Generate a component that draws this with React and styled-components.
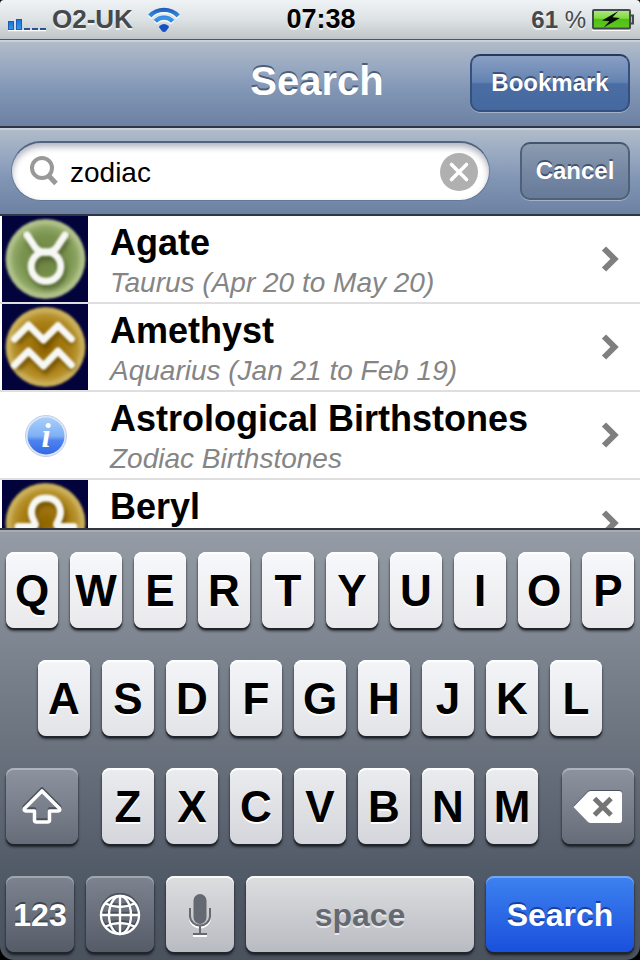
import React, { useState } from 'react';
import styled, { createGlobalStyle, css } from 'styled-components';

const results = [
  { name: 'Agate', detail: 'Taurus (Apr 20 to May 20)', sign: 'taurus' },
  { name: 'Amethyst', detail: 'Aquarius (Jan 21 to Feb 19)', sign: 'aquarius' },
  { name: 'Astrological Birthstones', detail: 'Zodiac Birthstones', sign: 'info' },
  { name: 'Beryl', detail: '', sign: 'libra' },
];

export default function App() {
  const [query, setQuery] = useState('zodiac');

  const type = (letter) => setQuery(query + letter.toLowerCase());

  return (
    <>
      <GlobalStyle />
      <Screen>
        <StatusBar>
          <StatusGroup>
            <SignalIcon />
            <Carrier>O2-UK</Carrier>
            <WifiIcon />
          </StatusGroup>
          <Clock>07:38</Clock>
          <StatusGroup $end>
            <Percent>61 <span>%</span></Percent>
            <BatteryIcon />
          </StatusGroup>
        </StatusBar>

        <NavBar>
          <span />
          <NavTitle>Search</NavTitle>
          <BarButton $blue>Bookmark</BarButton>
        </NavBar>

        <SearchBar onSubmit={(e) => e.preventDefault()}>
          <SearchField>
            <MagnifierIcon />
            <SearchInput
              aria-label="Search"
              value={query}
              onChange={(e) => setQuery(e.target.value)}
            />
            <ClearButton type="button" aria-label="Clear" onClick={() => setQuery('')}>
              <svg width="38" height="38" viewBox="0 0 38 38">
                <circle cx="19" cy="19" r="19" fill="#b0b0b0" />
                <path d="M11.5 11.5l15 15M26.5 11.5l-15 15" stroke="#fff" strokeWidth="3.6" strokeLinecap="round" />
              </svg>
            </ClearButton>
          </SearchField>
          <BarButton type="button" $narrow>Cancel</BarButton>
        </SearchBar>

        <List>
          {results.map((item) => (
            <Row key={item.name}>
              <RowLink href="#">
                <SignIcon sign={item.sign} />
                <RowText>
                  <RowTitle>{item.name}</RowTitle>
                  <RowDetail>{item.detail}</RowDetail>
                </RowText>
                <ChevronIcon />
              </RowLink>
            </Row>
          ))}
        </List>

        <Keyboard>
          <KeyRow>
            {[...'QWERTYUIOP'].map((k) => (
              <Key key={k} $tone="bright" onClick={() => type(k)}>{k}</Key>
            ))}
          </KeyRow>
          <KeyRow $inset>
            {[...'ASDFGHJKL'].map((k) => (
              <Key key={k} $tone="light" onClick={() => type(k)}>{k}</Key>
            ))}
          </KeyRow>
          <KeyRow $wide>
            <Key $tone="gray" $width="72px" aria-label="Shift"><ShiftIcon /></Key>
            <KeyGroup>
              {[...'ZXCVBNM'].map((k) => (
                <Key key={k} $tone="soft" onClick={() => type(k)}>{k}</Key>
              ))}
            </KeyGroup>
            <Key $tone="gray" $width="72px" aria-label="Delete" onClick={() => setQuery(query.slice(0, -1))}>
              <DeleteIcon />
            </Key>
          </KeyRow>
          <KeyRow>
            <Key $tone="slate" $width="68px" $label>123</Key>
            <Key $tone="slate" $width="68px" aria-label="Next keyboard"><GlobeIcon /></Key>
            <Key $tone="silver" $width="68px" aria-label="Dictate"><MicIcon /></Key>
            <Key $tone="silver" $label onClick={() => type(' ')}>space</Key>
            <Key $tone="blue" $width="148px" $label>Search</Key>
          </KeyRow>
        </Keyboard>
      </Screen>
    </>
  );
}

function SignalIcon() {
  return (
    <svg width="40" height="24" viewBox="0 0 40 24">
      <defs>
        <linearGradient id="bar" x1="0" y1="0" x2="0" y2="1">
          <stop offset="0" stopColor="#1d6fd0" />
          <stop offset="1" stopColor="#2f9bf0" />
        </linearGradient>
      </defs>
      <path d="M0 22.500h38" stroke="#fff" strokeWidth="1.500" />
      <rect x="0.500" y="13.500" width="5" height="8" fill="url(#bar)" stroke="#1a5cb8" />
      <rect x="8.500" y="11.500" width="5" height="10" fill="url(#bar)" stroke="#1a5cb8" />
      <path d="M16 21h6M24 21h6M32 21h6" stroke="#2a4f96" strokeWidth="2" />
    </svg>
  );
}

function WifiIcon() {
  return (
    <svg width="34" height="26" viewBox="0 0 34 26">
      <defs>
        <linearGradient id="wifi" x1="0" y1="0" x2="0" y2="25" gradientUnits="userSpaceOnUse">
          <stop offset="0" stopColor="#1c55b4" />
          <stop offset="0.45" stopColor="#3a97ea" />
          <stop offset="1" stopColor="#1347b4" />
        </linearGradient>
      </defs>
      <g transform="translate(0 1.500)" fill="none" stroke="#fff" strokeWidth="4.300">
        <path d="M2.800 9a19.500 19.500 0 0 1 28.400 0M8.300 14.300a12 12 0 0 1 17.400 0" />
      </g>
      <g fill="none" stroke="url(#wifi)" strokeWidth="4.300">
        <path d="M2.800 9a19.500 19.500 0 0 1 28.400 0" />
        <path d="M8.300 14.300a12 12 0 0 1 17.400 0" />
      </g>
      <path d="M17 25q-1.200 0-2-.8L12.300 20.500q-.6-1 .4-1.800a7 7 0 0 1 8.600 0q1 .8.400 1.800L19 24.200q-.8.800-2 .8z" fill="#1550c4" />
    </svg>
  );
}

function BatteryIcon() {
  return (
    <svg width="42" height="22" viewBox="0 0 42 22">
      <defs>
        <linearGradient id="battery" x1="0" y1="0" x2="0" y2="1">
          <stop offset="0" stopColor="#b2e58a" />
          <stop offset="0.45" stopColor="#7fdc3c" />
          <stop offset="0.5" stopColor="#4fbf10" />
          <stop offset="1" stopColor="#5fc924" />
        </linearGradient>
      </defs>
      <path d="M0 21.250h38" stroke="#fff" strokeWidth="1.500" />
      <rect x="1" y="1" width="37" height="18.500" rx="1" fill="url(#battery)" stroke="#434b4e" strokeWidth="2" />
      <path d="M39 6.500h2v8h-2" fill="#b8bec2" stroke="#434b4e" strokeWidth="2" />
      <path d="M26.500 2L10 11.500l7.500.8-6 6.200 16.500-9.500-7.500-.8z" fill="#080c08" />
    </svg>
  );
}

function MagnifierIcon() {
  return (
    <svg width="30" height="32" viewBox="0 0 30 32" fill="none" stroke="#999">
      <circle cx="13" cy="12" r="10" strokeWidth="4" />
      <path d="M19.500 19.500l7.500 8" strokeWidth="5" />
    </svg>
  );
}

function ChevronIcon() {
  return (
    <svg width="20" height="28" viewBox="0 0 20 28" fill="none">
      <path d="M4 3.500L14.500 14 4 24.500" stroke="#7f7f7f" strokeWidth="6" />
    </svg>
  );
}

const signPaths = {
  taurus: (
    <>
      <path d="M25 19l6 9q4 8.500 13 8.500T57 28l6-9" />
      <circle cx="44" cy="50.500" r="14.800" />
    </>
  ),
  aquarius: (
    <>
      <path d="M12.500 35L26.500 21l15 15 14.500-14.500L69.500 35" />
      <path d="M12.500 61L26.500 47l15 15L56 47l13.500 14" />
    </>
  ),
  libra: (
    <>
      <path d="M16 46.500h14c4 0 4-2 2.500-4.500-7-12-1-24 11.500-24s18.500 12 11.500 24c-1.500 2.500-1.500 4.500 2.500 4.500h14" />
      <path d="M18 62h54" />
    </>
  ),
};

function SignIcon({ sign }) {
  if (sign === 'info') {
    return (
      <svg width="86" height="86" viewBox="0 0 86 86">
        <defs>
          <linearGradient id="info" x1="0" y1="0" x2="0" y2="1">
            <stop offset="0" stopColor="#a9cffa" />
            <stop offset="0.5" stopColor="#7fb0f6" />
            <stop offset="0.62" stopColor="#4d84f0" />
            <stop offset="1" stopColor="#3468e4" />
          </linearGradient>
        </defs>
        <circle cx="44" cy="44" r="20.500" fill="#dfe7f6" stroke="#c3cfe8" />
        <circle cx="44" cy="44" r="18.500" fill="url(#info)" />
        <InfoLetter x="44" y="55">i</InfoLetter>
      </svg>
    );
  }

  const green = sign === 'taurus';
  return (
    <svg width="86" height="86" viewBox="0 0 86 86">
      <defs>
        <radialGradient id={sign + '-fill'}>
          <stop offset="0" stopColor={green ? '#6c8240' : '#8f6500'} />
          <stop offset="0.6" stopColor={green ? '#7a9450' : '#a97f14'} />
          <stop offset="0.8" stopColor={green ? '#8fa665' : '#b89330'} />
          <stop offset="0.92" stopColor={green ? '#b3c48c' : '#cdb45e'} />
          <stop offset="1" stopColor={green ? '#a3b080' : '#b89d4c'} />
        </radialGradient>
        <filter id={sign + '-soft'} x="-10%" y="-10%" width="120%" height="120%">
          <feGaussianBlur stdDeviation="1" />
        </filter>
        <filter id={sign + '-shade'} x="-20%" y="-20%" width="140%" height="140%">
          <feGaussianBlur stdDeviation="2" />
        </filter>
      </defs>
      <rect width="86" height="86" fill="#03033c" />
      <circle cx="43.500" cy="43" r="40" fill={`url(#${sign}-fill)`} filter={`url(#${sign}-soft)`} />
      <g fill="none" stroke={green ? '#44552a' : '#5c3f00'} strokeWidth="8" transform="translate(2 4)" opacity="0.6" filter={`url(#${sign}-shade)`}>
        {signPaths[sign]}
      </g>
      <g fill="none" stroke="#f7f8f4" strokeWidth="7" strokeLinecap="round" strokeLinejoin="round" filter={`url(#${sign}-soft)`}>
        {signPaths[sign]}
      </g>
    </svg>
  );
}

function ShiftIcon() {
  const d = 'M21 4L3.500 21.500q-1 2.500 1.500 2.500h8.500v9q0 2 2 2h11q2 0 2-2v-9H37q2.500 0 1.500-2.500z';
  return (
    <svg width="42" height="40" viewBox="0 0 42 40" strokeLinejoin="round" strokeWidth="3.600" fill="none">
      <path d={d} stroke="#4a5059" transform="translate(0 -2)" />
      <path d={d} stroke="#fff" />
    </svg>
  );
}

function DeleteIcon() {
  const d = 'M0.500 18L15 3q1.200-1 3-1h28q3 0 3 3v26q0 3-3 3H18q-1.800 0-3-1z';
  return (
    <svg width="50" height="36" viewBox="0 0 50 36">
      <path d={d} fill="#4d535d" transform="translate(0 -1)" />
      <path d={d} fill="#fff" />
      <path d="M21.500 9.500l16.500 16.500M38 9.500L21.500 26" stroke="#757575" strokeWidth="5" />
    </svg>
  );
}

function GlobeLines() {
  return (
    <>
      <circle cx="22" cy="22" r="19" />
      <ellipse cx="22" cy="22" rx="11" ry="19" />
      <path d="M22 3v38M3 22h38M7.500 10.500q14.500 7 29 0M7.500 33.500q14.500-7 29 0" />
    </>
  );
}

function GlobeIcon() {
  return (
    <svg width="44" height="44" viewBox="0 0 44 44" fill="none" strokeWidth="2.400">
      <g stroke="#3c424c" transform="translate(0 -2)" opacity="0.7"><GlobeLines /></g>
      <g stroke="#fff"><GlobeLines /></g>
    </svg>
  );
}

function MicIcon() {
  return (
    <svg width="24" height="44" viewBox="0 0 24 44" fill="none">
      <path d="M2 17v8a10 9.500 0 0 0 20 0v-8M5 43h14" stroke="#fff" strokeWidth="2" />
      <rect x="5.500" y="1" width="13" height="30" rx="6.500" fill="#656972" />
      <path d="M2 15v8a10 9.500 0 0 0 20 0v-8M12 33v7M5 41h14" stroke="#656972" strokeWidth="2" />
    </svg>
  );
}

const GlobalStyle = createGlobalStyle`
  * {
    box-sizing: border-box;
  }
  body {
    margin: 0;
    background: #000;
    font-family: "Liberation Sans", Arial, sans-serif;
  }
  button, input {
    font-family: inherit;
  }
  svg {
    display: block;
    flex-shrink: 0;
  }
`;

const Screen = styled.div`
  display: flex;
  flex-direction: column;
  height: 100vh;
  overflow: hidden;
  border-radius: 4px 4px 14px 14px;
`;

const StatusBar = styled.header`
  display: grid;
  grid-template-columns: 1fr auto 1fr;
  align-items: center;
  flex-shrink: 0;
  height: 40px;
  padding: 0 6px 0 8px;
  background: linear-gradient(#eff3f5, #dde2e4 50%, #bfc5c8);
  border-bottom: 1px solid #4f565c;
  text-shadow: 0 2px 0 rgba(255, 255, 255, 0.7);
`;

const StatusGroup = styled.div`
  display: flex;
  align-items: center;
  justify-content: ${(p) => (p.$end ? 'flex-end' : 'flex-start')};
  gap: ${(p) => (p.$end ? '6px' : '0')};
`;

const Carrier = styled.span`
  margin: 0 14px 0 4px;
  color: #45494c;
  font-size: 26px;
  font-weight: 700;
`;

const Clock = styled.time`
  color: #000;
  font-size: 27px;
  font-weight: 700;
`;

const Percent = styled.span`
  color: #45494c;
  font-size: 24px;
  font-weight: 700;
  white-space: nowrap;

  span {
    font-weight: 400;
  }
`;

const barFill = css`
  border-bottom: 2px solid #2d3748;
  background: linear-gradient(#b3bdca, #97a8c1 32%, #8094b4 60%, #6d82a2);
  box-shadow: inset 0 2px 0 rgba(255, 255, 255, 0.3);
`;

const NavBar = styled.nav`
  display: grid;
  grid-template-columns: 1fr auto 1fr;
  align-items: center;
  flex-shrink: 0;
  height: 88px;
  padding: 0 10px 0 4px;
  ${barFill}
`;

const NavTitle = styled.h1`
  margin: 0;
  padding-bottom: 4px;
  color: #fff;
  font-size: 40px;
  font-weight: 700;
  text-shadow: 0 -2px 0 #4d5e78;
`;

const BarButton = styled.button`
  justify-self: end;
  flex-shrink: 0;
  width: ${(p) => (p.$narrow ? '110px' : '160px')};
  height: 58px;
  padding: 0;
  border: 2px solid ${(p) => (p.$blue ? '#35507c' : '#4f6178')};
  border-top-color: ${(p) => (p.$blue ? '#253a5e' : '#44546c')};
  border-radius: 10px;
  background: ${(p) =>
    p.$blue
      ? 'linear-gradient(#8a9fc3, #6383b2 48%, #4a6da3 52%, #4568a0)'
      : 'linear-gradient(#8c9bb0, #7688a3 50%, #667b9a)'};
  box-shadow: 0 1px 0 rgba(255, 255, 255, 0.35);
  color: #fff;
  font-size: 24px;
  font-weight: 700;
  text-shadow: 0 -2px 0 rgba(40, 55, 85, 0.7);
  cursor: pointer;
`;

const SearchBar = styled.form`
  display: flex;
  align-items: center;
  flex-shrink: 0;
  gap: 30px;
  height: 88px;
  padding: 0 10px 0 11px;
  ${barFill}
`;

const SearchField = styled.label`
  display: flex;
  align-items: center;
  flex: 1;
  min-width: 0;
  height: 60px;
  padding: 0 11px 0 17px;
  border: 1px solid #64789a;
  border-top: 2px solid #53637f;
  border-radius: 30px;
  background: #fff;
  box-shadow: inset 0 4px 6px rgba(60, 70, 100, 0.4);
`;

const SearchInput = styled.input`
  flex: 1;
  min-width: 0;
  padding: 2px 11px 0;
  border: none;
  outline: none;
  background: transparent;
  color: #000;
  font-size: 28px;
`;

const ClearButton = styled.button`
  padding: 0;
  border: none;
  border-radius: 50%;
  background: none;
  cursor: pointer;
`;

const List = styled.ul`
  flex: 1;
  min-height: 0;
  margin: 0;
  padding: 0;
  overflow-y: auto;
  scrollbar-width: none;
  background: #fff;
  list-style: none;
`;

const Row = styled.li`
  height: 88px;
  border-bottom: 2px solid #dfdfdf;
`;

const RowLink = styled.a`
  display: flex;
  align-items: center;
  gap: 22px;
  padding: 0 20px 0 2px;
  color: inherit;
  text-decoration: none;
`;

const RowText = styled.div`
  display: flex;
  flex-direction: column;
  align-self: flex-start;
  flex: 1;
  gap: 4px;
  min-width: 0;
  padding-top: 7px;
  white-space: nowrap;
`;

const RowTitle = styled.span`
  color: #000;
  font-size: 36px;
  font-weight: 700;
  line-height: 40px;
`;

const RowDetail = styled.span`
  color: #858585;
  font-size: 28px;
  font-style: italic;
  line-height: 32px;
`;

const InfoLetter = styled.text`
  fill: #fff;
  font-family: "Liberation Serif", serif;
  font-size: 33px;
  font-style: italic;
  font-weight: 700;
  text-anchor: middle;
`;

const Keyboard = styled.section`
  display: flex;
  flex-direction: column;
  flex-shrink: 0;
  gap: 32px;
  padding: 22px 6px 8px;
  border-top: 2px solid #33363f;
  background: linear-gradient(#959ca6, #7c848f 28%, #69717d 52%, #4f5865 82%, #4a525e);
  box-shadow: inset 0 2px 0 #a7abb4;
`;

const KeyRow = styled.div`
  display: flex;
  gap: ${(p) => (p.$wide ? '24px' : '12px')};
  padding: ${(p) => (p.$inset ? '0 32px' : '0')};
`;

const KeyGroup = styled.div`
  display: flex;
  flex: 1;
  gap: 12px;
`;

const tones = {
  bright: { fill: '#f7f8fb, #e9e9ec', edge: '#fff', text: '#000', shadow: '0 2px 0 #fff' },
  light: { fill: '#f3f5f8, #e3e4e7', edge: '#fff', text: '#000', shadow: '0 2px 0 #fff' },
  soft: { fill: '#ebecef, #d5d6db', edge: '#fff', text: '#000', shadow: '0 2px 0 #fff' },
  silver: { fill: '#dcdee0, #b9bbc2', edge: '#fafafa', text: '#656972', shadow: '0 2px 0 #e8e9eb' },
  gray: { fill: '#8d939f, #666d79', edge: '#aeb4be', text: '#fff', shadow: '0 -2px 0 #444a54' },
  slate: { fill: '#7d848f, #555c68', edge: '#a0a6b0', text: '#fff', shadow: '0 -2px 0 #3e444e' },
  blue: { fill: '#3d82f0, #1a50dc', edge: '#74a5f2', text: '#fff', shadow: '0 -2px 0 #1a3f96' },
};

const Key = styled.button`
  display: flex;
  align-items: center;
  justify-content: center;
  flex: ${(p) => (p.$width ? `0 0 ${p.$width}` : '1 1 0')};
  min-width: 0;
  height: 76px;
  padding: 2px 0 0;
  border: none;
  border-radius: 8px;
  background: linear-gradient(${(p) => tones[p.$tone].fill});
  box-shadow: inset 0 2px 0 ${(p) => tones[p.$tone].edge}, 0 2px 1px #20242b, 0 3px 3px rgba(0, 0, 0, 0.6);
  color: ${(p) => tones[p.$tone].text};
  font-size: ${(p) => (p.$label ? '32px' : '44px')};
  font-weight: 700;
  text-shadow: ${(p) => tones[p.$tone].shadow};
  cursor: pointer;
`;
